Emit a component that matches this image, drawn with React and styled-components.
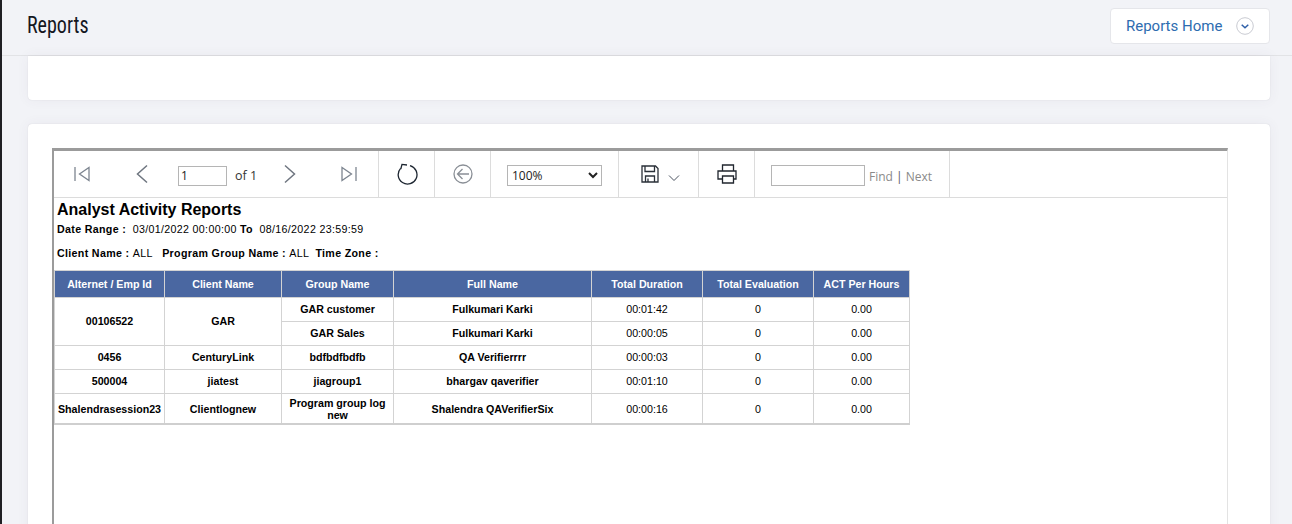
import React from 'react'
import styled, { createGlobalStyle } from 'styled-components'

const GlobalStyle = createGlobalStyle`
    html, body {
        margin: 0;
        height: 100%;
        overflow: hidden;
        background: #f2f3f7;
    }
`

const Page = styled.div`
    height: 524px;
    overflow: hidden;
    border-left: 2px solid #1f1f23;
    background: #f2f3f7;
    font-family: "Liberation Sans", Arial, sans-serif;
`

const Header = styled.header`
    height: 52px;
    box-sizing: content-box;
    border-bottom: 1px solid #e2e3e6;
    display: flex;
    align-items: center;
    justify-content: space-between;
    padding: 0 22px 3px 25px;
`

const PageTitle = styled.h1`
    margin: 0 0 2px;
    font-family: "Liberation Sans Narrow", "Roboto Condensed", Roboto, sans-serif;
    font-weight: 400;
    font-size: 23px;
    color: #15171f;
    transform: scaleX(0.87);
    transform-origin: left center;
`

const HomeButton = styled.button`
    width: 160px;
    height: 36px;
    box-sizing: border-box;
    display: flex;
    align-items: center;
    justify-content: space-between;
    padding: 0 15px 0 15px;
    background: #fff;
    border: 1px solid #e5e6ea;
    border-radius: 4px;
    color: #2d6cb0;
    font-family: Roboto, sans-serif;
    font-size: 15px;
`

const Content = styled.main`
    padding: 0 22px 0 26px;
    display: flex;
    flex-direction: column;
    gap: 24px;
`

const Card = styled.section`
    background: #fff;
    border-radius: ${p => (p.$flat ? '0 0 4px 4px' : '4px')};
    box-shadow: 0 0 1px rgba(60, 60, 80, 0.22), 0 0 13px rgba(82, 63, 105, 0.06);
    box-sizing: border-box;
    height: ${p => p.$height || 'auto'};
    padding: ${p => p.$padding || 0};
`

const Viewer = styled.div`
    height: 480px;
    border-top: 3px solid #9b9b9b;
    border-left: 2px solid #9b9b9b;
    border-right: 1px solid #e3e3e3;
    background: #fff;
`

const Toolbar = styled.div`
    height: 47px;
    box-sizing: border-box;
    display: flex;
    border-bottom: 1px solid #dcdcdc;
`

const ToolGroup = styled.div`
    width: ${p => p.$width}px;
    box-sizing: border-box;
    flex: none;
    display: flex;
    align-items: center;
    border-right: 1px solid #dcdcdc;
    justify-content: ${p => p.$justify || 'center'};
    padding-left: ${p => p.$left || 0}px;
`

const IconBtn = styled.span`
    width: ${p => p.$width || 22}px;
    margin-left: ${p => p.$left || 0}px;
    margin-top: ${p => p.$top || 0}px;
    flex: none;
    display: flex;
    justify-content: center;
    align-items: center;
`

const PageInput = styled.input`
    width: 49px;
    height: 20px;
    box-sizing: border-box;
    margin: 3px 0 0 29px;
    padding: 1px 2px;
    border: 1px solid #b5b5b5;
    font-family: "Open Sans", sans-serif;
    font-size: 12px;
    color: #222;
    outline: none;
`

const OfText = styled.span`
    margin: 3px 0 0 8px;
    font-family: "Open Sans", sans-serif;
    font-size: 12.5px;
    color: #333;
    white-space: nowrap;
`

const ZoomSelect = styled.select`
    width: 95px;
    height: 21px;
    box-sizing: border-box;
    margin-top: 2px;
    padding: 0;
    background: #fff;
    border: 1px solid #b5b5b5;
    border-radius: 0;
    font-family: "Open Sans", sans-serif;
    font-size: 12px;
    color: #222;
`

const FindInput = styled.input`
    width: 94px;
    height: 21px;
    box-sizing: border-box;
    margin-top: 2px;
    border: 1px solid #b5b5b5;
    outline: none;
`

const FindLinks = styled.span`
    margin: 4px 0 0 4px;
    font-family: "Open Sans", sans-serif;
    font-size: 12px;
    color: #8a8a8a;
    white-space: nowrap;

    b {
        font-weight: 400;
        color: #555;
    }
`

const ReportBody = styled.div`
    padding: 3px 0 0 3px;
`

const ReportTitle = styled.h2`
    margin: 0;
    font-size: 16px;
    line-height: 18px;
    font-weight: 700;
    color: #000;
`

const MetaLine = styled.div`
    margin-top: ${p => p.$top}px;
    margin-bottom: ${p => p.$bottom || 0}px;
    font-size: 10.67px;
    line-height: 13px;
    letter-spacing: 0.33px;
    color: #000;
    white-space: pre;

    b {
        font-weight: 700;
    }
`

const ReportTable = styled.table`
    margin-left: -3px;
    border-collapse: collapse;
    table-layout: fixed;
    width: 855px;
    font-size: 10.67px;
    line-height: 12px;
    color: #000;
    border-bottom: 2px solid #cfcfcf;
`

const HeadCell = styled.th`
    height: 27px;
    padding: 0;
    box-sizing: border-box;
    background: #4a67a1;
    color: #fff;
    font-weight: 700;
    text-align: center;
    border: 1px solid #d3d3d3;
    border-top-width: 1px;
`

const Cell = styled.td`
    height: ${p => (p.$tall ? 30 : 24)}px;
    padding: ${p => (p.$tall ? '2px 0 0' : '0 0 2px')};
    box-sizing: border-box;
    text-align: center;
    font-weight: ${p => (p.$bold ? 700 : 400)};
    border: 1px solid #d3d3d3;
`

const columns = [
    ['Alternet / Emp Id', 110],
    ['Client Name', 117],
    ['Group Name', 112],
    ['Full Name', 198],
    ['Total Duration', 111],
    ['Total Evaluation', 111],
    ['ACT Per Hours', 96],
]

const stroke = { fill: 'none', strokeWidth: 1.3 }

function FirstIcon() {
    return (
        <svg width="18" height="18" viewBox="0 0 18 18" {...stroke} stroke="#7d8590">
            <path d="M2 2v14M16 2.5v13L6.5 9z" />
        </svg>
    )
}

function LastIcon() {
    return (
        <svg width="18" height="18" viewBox="0 0 18 18" {...stroke} stroke="#7d8590">
            <path d="M16 2v14M2 2.5v13L11.5 9z" />
        </svg>
    )
}

function PrevIcon() {
    return (
        <svg width="14" height="20" viewBox="0 0 14 20" {...stroke} stroke="#6f7680" strokeWidth="1.5">
            <path d="M12 1.5L2.5 10l9.5 8.5" />
        </svg>
    )
}

function NextIcon() {
    return (
        <svg width="14" height="20" viewBox="0 0 14 20" {...stroke} stroke="#6f7680" strokeWidth="1.5">
            <path d="M2 1.5l9.5 8.5L2 18.5" />
        </svg>
    )
}

function RefreshIcon() {
    return (
        <svg width="22" height="24" viewBox="0 0 22 24" {...stroke} stroke="#1c2530">
            <path d="M14 3.6A9.4 9.4 0 1 1 4.6 6.4" />
            <path d="M4.8 7L6 2.4l5 .6" />
        </svg>
    )
}

function BackIcon() {
    return (
        <svg width="20" height="20" viewBox="0 0 20 20" {...stroke} stroke="#8a8f96">
            <circle cx="10" cy="10" r="9" />
            <path d="M16 10H4.5M9.5 5l-5 5 5 5" />
        </svg>
    )
}

function SaveIcon() {
    return (
        <svg width="18" height="18" viewBox="0 0 18 18" {...stroke} stroke="#2a3038">
            <path d="M1 1h13.5L17 3.5V17H1z" />
            <path d="M4 1v5.5h9.5V1M4.5 17v-6h9v6M7 13.5V17" />
        </svg>
    )
}

function SmallChevron() {
    return (
        <svg width="12" height="8" viewBox="0 0 12 8" {...stroke} stroke="#4a5360" strokeWidth="1">
            <path d="M1 1.5l5 5 5-5" />
        </svg>
    )
}

function PrintIcon() {
    return (
        <svg width="20" height="20" viewBox="0 0 20 20" {...stroke} stroke="#20262e">
            <path d="M5.5 7V1h11v6M5.5 15H1V7h18v8h-2.5" />
            <path d="M5.5 12h11v7h-11z" />
        </svg>
    )
}

function CircleChevron() {
    return (
        <svg width="18" height="18" viewBox="0 0 18 18" fill="none">
            <circle cx="9" cy="9" r="8.3" stroke="#c9cbd2" />
            <path d="M5.7 7.8l3.3 3 3.3-3" stroke="#2d5fa8" strokeWidth="1.5" />
        </svg>
    )
}

export default function App() {
    return (
        <Page>
            <GlobalStyle />
            <Header>
                <PageTitle>Reports</PageTitle>
                <HomeButton>
                    Reports Home
                    <CircleChevron />
                </HomeButton>
            </Header>
            <Content>
                <Card $flat $height="44px" />
                <Card $padding="24px 42px 0 24px">
                    <Viewer>
                        <Toolbar>
                            <ToolGroup $width={325} $justify="flex-start" $left={19}>
                                <IconBtn $width={18}><FirstIcon /></IconBtn>
                                <IconBtn $width={14} $left={44}><PrevIcon /></IconBtn>
                                <PageInput defaultValue="1" />
                                <OfText>of 1</OfText>
                                <IconBtn $width={14} $left={26}><NextIcon /></IconBtn>
                                <IconBtn $width={18} $left={43}><LastIcon /></IconBtn>
                            </ToolGroup>
                            <ToolGroup $width={56}><RefreshIcon /></ToolGroup>
                            <ToolGroup $width={56}><BackIcon /></ToolGroup>
                            <ToolGroup $width={128}>
                                <ZoomSelect defaultValue="100%">
                                    <option>100%</option>
                                </ZoomSelect>
                            </ToolGroup>
                            <ToolGroup $width={80} $justify="flex-start" $left={22}>
                                <SaveIcon />
                                <IconBtn $width={12} $left={9} $top={7}><SmallChevron /></IconBtn>
                            </ToolGroup>
                            <ToolGroup $width={56}><PrintIcon /></ToolGroup>
                            <ToolGroup $width={195} $justify="flex-start" $left={16}>
                                <FindInput />
                                <FindLinks>Find <b>|</b> Next</FindLinks>
                            </ToolGroup>
                        </Toolbar>
                        <ReportBody>
                            <ReportTitle>Analyst Activity Reports</ReportTitle>
                            <MetaLine $top={4}><b>Date Range : </b> 03/01/2022 00:00:00 <b>To</b>  08/16/2022 23:59:59</MetaLine>
                            <MetaLine $top={11} $bottom={10}><b>Client Name : </b>ALL   <b>Program Group Name : </b>ALL  <b>Time Zone :</b></MetaLine>
                            <ReportTable>
                                <colgroup>
                                    {columns.map(([name, width]) => <col key={name} width={width} />)}
                                </colgroup>
                                <thead>
                                    <tr>
                                        {columns.map(([name]) => <HeadCell key={name}>{name}</HeadCell>)}
                                    </tr>
                                </thead>
                                <tbody>
                                    <tr>
                                        <Cell $bold rowSpan={2}>00106522</Cell>
                                        <Cell $bold rowSpan={2}>GAR</Cell>
                                        <Cell $bold>GAR customer</Cell>
                                        <Cell $bold>Fulkumari Karki</Cell>
                                        <Cell>00:01:42</Cell>
                                        <Cell>0</Cell>
                                        <Cell>0.00</Cell>
                                    </tr>
                                    <tr>
                                        <Cell $bold>GAR Sales</Cell>
                                        <Cell $bold>Fulkumari Karki</Cell>
                                        <Cell>00:00:05</Cell>
                                        <Cell>0</Cell>
                                        <Cell>0.00</Cell>
                                    </tr>
                                    <tr>
                                        <Cell $bold>0456</Cell>
                                        <Cell $bold>CenturyLink</Cell>
                                        <Cell $bold>bdfbdfbdfb</Cell>
                                        <Cell $bold>QA Verifierrrr</Cell>
                                        <Cell>00:00:03</Cell>
                                        <Cell>0</Cell>
                                        <Cell>0.00</Cell>
                                    </tr>
                                    <tr>
                                        <Cell $bold>500004</Cell>
                                        <Cell $bold>jiatest</Cell>
                                        <Cell $bold>jiagroup1</Cell>
                                        <Cell $bold>bhargav qaverifier</Cell>
                                        <Cell>00:01:10</Cell>
                                        <Cell>0</Cell>
                                        <Cell>0.00</Cell>
                                    </tr>
                                    <tr>
                                        <Cell $bold $tall>Shalendrasession23</Cell>
                                        <Cell $bold $tall>Clientlognew</Cell>
                                        <Cell $bold $tall>Program group log new</Cell>
                                        <Cell $bold $tall>Shalendra QAVerifierSix</Cell>
                                        <Cell $tall>00:00:16</Cell>
                                        <Cell $tall>0</Cell>
                                        <Cell $tall>0.00</Cell>
                                    </tr>
                                </tbody>
                            </ReportTable>
                        </ReportBody>
                    </Viewer>
                </Card>
            </Content>
        </Page>
    )
}
